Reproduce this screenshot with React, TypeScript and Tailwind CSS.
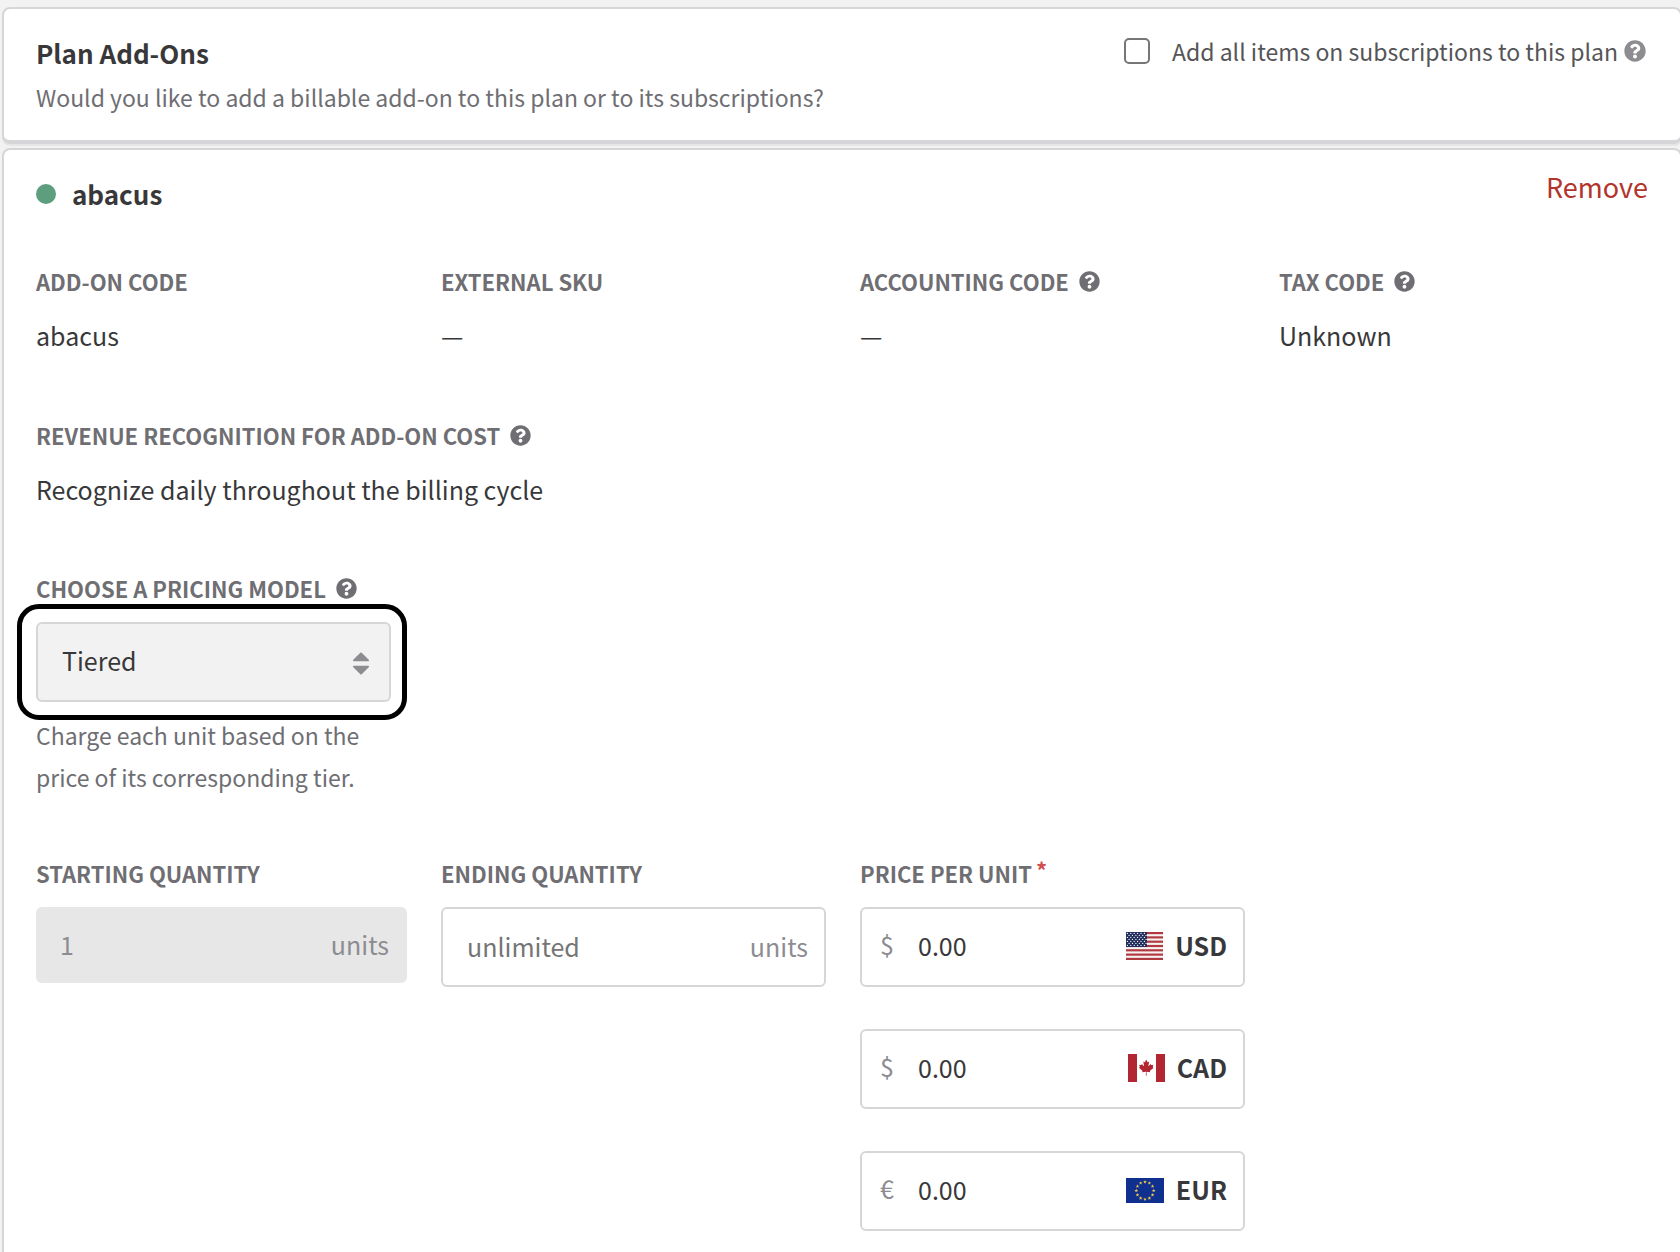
import React, { useState } from 'react';
import { FaQuestionCircle } from 'react-icons/fa';

const PRICING_MODELS = ['Fixed', 'Tiered', 'Volume', 'Stairstep'];

const UsFlag: React.FC = () => {
  const stars = [];
  for (let row = 0; row < 7; row++) {
    for (let col = 0; col < 6; col++) {
      stars.push({ x: 1.4 + col * 3.4 + (row % 2 ? 1.7 : 0), y: 1.4 + row * 2 });
    }
  }

  return (
    <svg viewBox="0 0 37 28" className="h-7 w-[37px]" aria-hidden="true">
      <rect width="37" height="28" fill="#f7f2f2" />
      {[0, 1, 2, 3, 4, 5, 6].map(i => (
        <rect key={i} y={(i * 2 * 28) / 13} width="37" height={28 / 13} fill="#b0393f" />
      ))}
      <rect width="21" height="15" fill="#23305f" />
      {stars.filter(s => s.x < 20.5).map(s => (
        <circle key={`${s.x}-${s.y}`} cx={s.x} cy={s.y} r="0.6" fill="#ffffff" />
      ))}
    </svg>
  );
};

const CaFlag: React.FC = () => (
  <svg viewBox="0 0 640 484" className="h-7 w-[37px]" aria-hidden="true">
    <rect width="640" height="484" fill="#ffffff" />
    <path fill="#b22533" d="M0 0h156v484H0zM484 0h156v484H484z" />
    <path
      fill="#b22533"
      d="M201 232l-13.3 4.4 61.4 54c4.7 13.7-1.6 17.8-5.6 25l66.6-8.4-1.6 67 13.9-.3-3.1-66.6 66.7 8c-4.1-8.7-7.8-13.3-4-27.2l61.3-51-10.7-4c-8.8-6.8 3.8-32.6 5.6-48.9 0 0-35.7 12.3-38 5.8l-9.2-17.5-32.6 35.8c-3.5.9-5-.5-5.9-3.5l15-74.8-23.8 13.4c-2 .9-4 .1-5.2-2.2l-23-46-23.6 47.8c-1.8 1.7-3.6 1.9-5 .7L264 130.8l13.7 74.1c-1.1 3-3.7 3.8-6.7 2.2l-31.2-35.3c-4 6.5-6.8 17.1-12.2 19.5-5.4 2.3-23.5-4.5-35.6-7 4.2 14.8 17 39.6 9 47.7z"
    />
  </svg>
);

const STAR = 'M0-1.8L.5-.5 1.8-.5.8.4 1.1 1.6 0 .9-1.1 1.6-.8.4-1.8-.5-.5-.5z';

const EuFlag: React.FC = () => (
  <svg viewBox="0 0 38 25" className="h-[25px] w-[38px]" aria-hidden="true">
    <rect width="38" height="25" fill="#10308f" />
    {Array.from({ length: 12 }, (_, i) => {
      const a = (i * Math.PI) / 6;
      return (
        <path
          key={i}
          d={STAR}
          fill="#f0c846"
          transform={`translate(${19 + 8.7 * Math.sin(a)} ${12.5 - 8.7 * Math.cos(a)})`}
        />
      );
    })}
  </svg>
);

const CURRENCIES = [
  { code: 'USD', symbol: '$', Flag: UsFlag },
  { code: 'CAD', symbol: '$', Flag: CaFlag },
  { code: 'EUR', symbol: '€', Flag: EuFlag },
];

const LABEL = 'flex h-8 items-center text-[22px] leading-8 font-bold uppercase text-[#6e6e73]';

const Help: React.FC<{ topic: string }> = ({ topic }) => (
  <button type="button" aria-label={`Help: ${topic}`} className="ml-2.5 shrink-0 text-[#6e6e73]">
    <FaQuestionCircle className="size-[21px]" />
  </button>
);

const Detail: React.FC<{ label: string; value: string; help?: boolean; className?: string }> = ({
  label,
  value,
  help,
  className = '',
}) => (
  <div className={className}>
    <dt className={LABEL}>
      {label}
      {help && <Help topic={label} />}
    </dt>
    <dd className="mt-5 text-[25px] leading-9 text-[#38383a]">{value}</dd>
  </div>
);

const PlanHeader: React.FC = () => {
  const [addAll, setAddAll] = useState(false);

  return (
    <section className="flex items-start justify-between rounded-lg border-2 border-b-4 border-[#d6d6d8] bg-white pt-[26px] pr-[34px] pb-[25px] pl-8 shadow-[0_2px_0_#e6e6e6]">
      <div>
        <h2 className="text-[26px] leading-9 font-bold text-[#38383a]">Plan Add-Ons</h2>
        <p className="mt-2 text-[23px] leading-9 text-[#6e6e73]">
          Would you like to add a billable add-on to this plan or to its subscriptions?
        </p>
      </div>
      <div className="flex h-8 items-center">
        <input
          id="add-all"
          type="checkbox"
          checked={addAll}
          onChange={e => setAddAll(e.target.checked)}
          className="size-[26px] appearance-none rounded-[5px] border-2 border-[#767676] bg-white checked:bg-[#767676]"
        />
        <label htmlFor="add-all" className="ml-[22px] text-[23px] leading-8 text-[#555557]">
          Add all items on subscriptions to this plan
        </label>
        <button type="button" aria-label="Help: add all items" className="ml-1.5 text-[#8c8c91]">
          <FaQuestionCircle className="size-[22px]" />
        </button>
      </div>
    </section>
  );
};

const PricingModel: React.FC = () => {
  const [model, setModel] = useState('Tiered');

  return (
    <div className="w-[355px]">
      <div className={LABEL}>
        <label htmlFor="pricing-model">Choose a pricing model</label>
        <Help topic="pricing model" />
      </div>
      <div className="relative mt-[18px]">
        <select
          id="pricing-model"
          value={model}
          onChange={e => setModel(e.target.value)}
          className="h-20 w-full appearance-none rounded-md border-2 border-[#d6d6d8] bg-[#f2f2f2] pb-0.5 pl-6 text-[25px] text-[#38383a] outline-none"
        >
          {PRICING_MODELS.map(name => (
            <option key={name}>{name}</option>
          ))}
        </select>
        <svg viewBox="0 0 16 23" className="pointer-events-none absolute top-[30px] right-[22px] h-[23px] w-4" aria-hidden="true">
          <path
            d="M7.3.7q.7-.6 1.4 0L16 8v.6q0 .7-.7.7H.7Q0 9.3 0 8.6V8zM7.3 22.3q.7.6 1.4 0L16 15v-.6q0-.7-.7-.7H.7q-.7 0-.7.7v.6z"
            fill="#8c8c91"
          />
        </svg>
        {/* Focus ring */}
        <span className="pointer-events-none absolute -top-[18px] -right-4 -bottom-[18px] -left-[19px] rounded-[22px] border-5 border-black" />
      </div>
      <p className="mt-3 text-[23px] leading-[42px] text-[#6e6e73]">
        Charge each unit based on the price of its corresponding tier.
      </p>
    </div>
  );
};

const FIELD = 'mt-[18px] flex h-20 items-center rounded-md border-2 border-[#d6d6d8] bg-white';

const TierRow: React.FC = () => (
  <div className="mt-[59px] grid grid-cols-4 gap-x-[34px]">
    <div className="pl-3.5">
      <label htmlFor="starting" className={LABEL}>Starting quantity</label>
      <div className="mt-[18px] flex h-[76px] items-center rounded-md bg-[#e7e7e7] pr-[18px] pl-6 text-[25px] text-[#8c8c91]">
        <input id="starting" disabled defaultValue="1" className="w-0 min-w-0 flex-1" />
        <span>units</span>
      </div>
    </div>
    <div>
      <label htmlFor="ending" className={LABEL}>Ending quantity</label>
      <div className={`${FIELD} pr-4 pl-6 text-[25px]`}>
        <input id="ending" placeholder="unlimited" className="w-0 min-w-0 flex-1 outline-none placeholder:text-[#757575]" />
        <span className="text-[#8c8c91]">units</span>
      </div>
    </div>
    <div>
      <div className={LABEL}>
        Price per unit
        <span className="ml-1 self-start leading-6 text-[#d0504f]">*</span>
      </div>
      <div className="flex flex-col gap-6">
        {CURRENCIES.map(({ code, symbol, Flag }) => (
          <div key={code} className={`${FIELD} pr-4 pb-0.5 pl-[18px] text-[25px] text-[#38383a]`}>
            <span className="w-[38px] pb-0.5 text-[#8c8c91]">{symbol}</span>
            <input aria-label={`Price per unit in ${code}`} defaultValue="0.00" className="w-0 min-w-0 flex-1 outline-none" />
            <Flag />
            <span className="ml-3 font-bold">{code}</span>
          </div>
        ))}
      </div>
    </div>
  </div>
);

const AddOnCard: React.FC = () => (
  <section className="mt-1 flex-1 rounded-t-lg border-2 border-b-0 border-[#d6d6d8] bg-white pt-5 pr-4 pb-5 pl-[18px]">
    <div className="flex items-start justify-between pr-4 pl-3.5">
      <div className="mt-1.5 flex h-9 items-center">
        <span className="size-5 rounded-full bg-[#5c9e7e]" />
        <h3 className="ml-4 text-[26px] leading-9 font-bold text-[#38383a]">abacus</h3>
      </div>
      <button type="button" className="text-[27px] leading-[34px] text-[#b3342d]">Remove</button>
    </div>

    <dl>
      <div className="mt-[53px] grid grid-cols-4 gap-x-[34px]">
        <Detail label="Add-on code" value="abacus" className="pl-3.5" />
        <Detail label="External SKU" value="—" />
        <Detail label="Accounting code" value="—" help />
        <Detail label="Tax code" value="Unknown" help />
      </div>
      <Detail
        label="Revenue recognition for add-on cost"
        value="Recognize daily throughout the billing cycle"
        help
        className="mt-[66px] pl-3.5"
      />
    </dl>

    <div className="mt-[65px] pl-3.5">
      <PricingModel />
    </div>
    <TierRow />
  </section>
);

const App: React.FC = () => (
  <main className="-mr-0.5 flex min-h-screen flex-col overflow-hidden bg-[#f2f2f2] pt-[7px] pl-0.5 font-['Noto_Sans_CJK_SC',sans-serif]">
    <PlanHeader />
    <AddOnCard />
  </main>
);

export default App;
